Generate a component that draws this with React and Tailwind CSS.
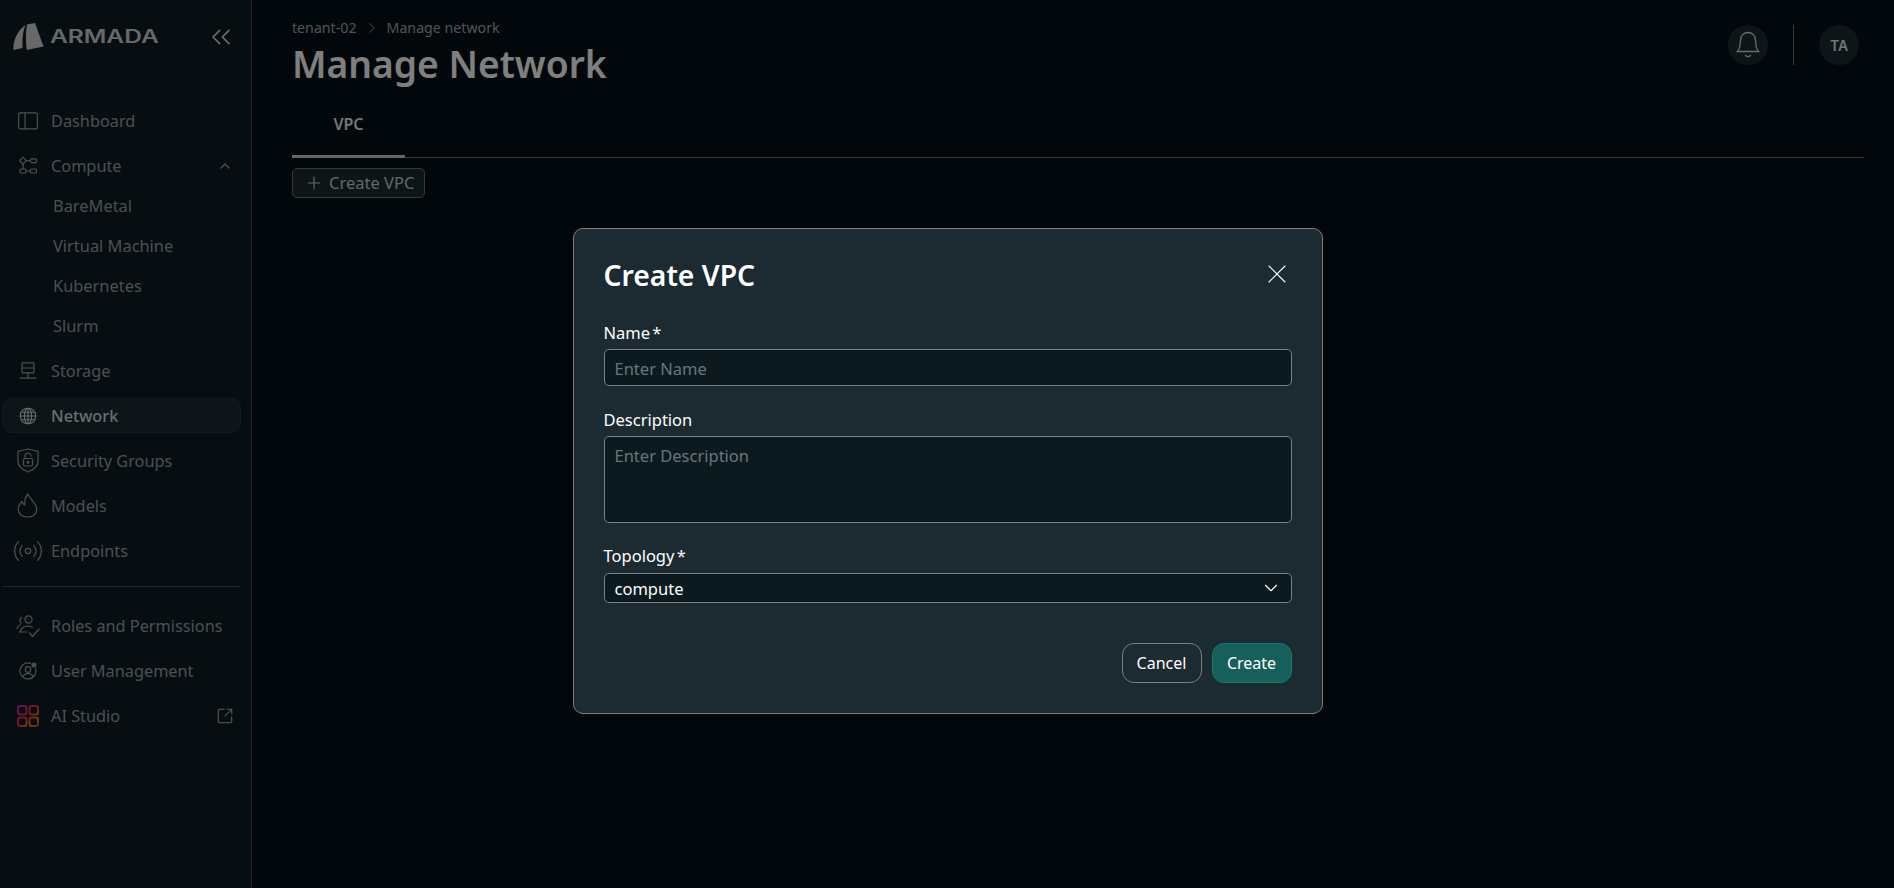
import React from 'react';
import { ChevronsLeft, ChevronUp, ChevronRight, ChevronDown, Plus, Radio, SquareArrowOutUpRight, X } from 'lucide-react';

const iconProps = {
  fill: 'none',
  stroke: 'currentColor',
  strokeWidth: 1.2,
  strokeLinecap: 'round',
  strokeLinejoin: 'round',
};

const DashboardIcon = () => (
  <svg width="20" height="18" viewBox="0 0 20 18" {...iconProps}>
    <rect x="0.6" y="0.9" width="18.8" height="16" rx="2" />
    <path d="M7 1v16" />
  </svg>
);

const ComputeIcon = () => (
  <svg width="20" height="20" viewBox="0 0 20 20" {...iconProps}>
    <path d="M5 1.2 8.4 4.6 5 8 1.6 4.6Z" />
    <rect x="12.5" y="2.8" width="6" height="3.8" rx="1" />
    <rect x="2" y="13" width="6" height="4" rx="1" />
    <rect x="12.5" y="13" width="6" height="4" rx="1" />
    <path d="M8.4 4.6h4M5 8v5M8 15h4.5" />
  </svg>
);

const StorageIcon = () => (
  <svg width="18" height="18" viewBox="0 0 18 18" {...iconProps}>
    <rect x="3" y="0.8" width="12" height="10" rx="0.5" />
    <path d="M3 6h12M9 10.800v5.400M1 16.200h16" />
  </svg>
);

const GlobeIcon = () => (
  <svg width="18" height="18" viewBox="0 0 18 18" {...iconProps} strokeWidth="1.1">
    <circle cx="9" cy="9" r="7.8" />
    <ellipse cx="9" cy="9" rx="3.6" ry="7.8" />
    <path d="M9 1.2v15.6M1.2 9h15.6M2.2 5.2h13.6M2.2 12.8h13.6" />
  </svg>
);

const ShieldIcon = () => (
  <svg width="22" height="25" viewBox="0 0 22 25" {...iconProps}>
    <path d="M1 3.4C4.5 2.6 7.8 1.8 11 1c3.2.8 6.500 1.600 10 2.400v10.200c0 4.600-4.600 8.200-10 10.400-5.400-2.200-10-5.800-10-10.400Z" />
    <rect x="6.500" y="10.500" width="9" height="7.500" rx="1.500" />
    <path d="M8 10.500V8.200a3 3 0 0 1 6 0" />
    <circle cx="11" cy="14.200" r="0.900" />
  </svg>
);

const FlameIcon = () => (
  <svg width="21" height="25" viewBox="0 0 21 25" {...iconProps}>
    <path d="M11 1c.6 5 8.800 8.500 8.800 15.500 0 4.500-4 7.500-9.300 7.500S1.200 21 1.200 16.500c0-3.500 1.800-6 3.800-8 .4 1.700 1.300 3 2.800 3.600C7.500 8 8 4 11 1Z" />
  </svg>
);

const RolesIcon = () => (
  <svg width="24" height="24" viewBox="0 0 24 24" {...iconProps}>
    <circle cx="12.500" cy="5.500" r="3.600" />
    <path d="M5.500 3.500a3.400 3.400 0 0 0-.5 5.500M1 14.500c.3-1.800 1.500-3.200 3-3.800M4 18c1-3.600 4-5.800 8-5.800 1.600 0 3 .4 4.200 1" />
    <path d="M4 18h7M13.500 19l3 3.500 6.500-7.500" />
  </svg>
);

const UserMgmtIcon = () => (
  <svg width="18" height="18" viewBox="0 0 18 18" {...iconProps}>
    <path d="M11.500 1.400A8 8 0 1 0 16.500 6.500" />
    <circle cx="9" cy="7.500" r="2.800" />
    <path d="M3.800 14.500c1-2 3-3 5.200-3s4.200 1 5.200 3" />
    <circle cx="15" cy="3" r="2" fill="currentColor" />
  </svg>
);

const StudioIcon = () => (
  <svg width="22" height="22" viewBox="0 0 22 22" fill="none" strokeWidth="2">
    <defs>
      <linearGradient id="studio" x1="0" y1="0" x2="22" y2="22" gradientUnits="userSpaceOnUse">
        <stop offset="0" stopColor="#c026d3" />
        <stop offset="0.45" stopColor="#ef2b2b" />
        <stop offset="0.8" stopColor="#f97316" />
        <stop offset="1" stopColor="#a21caf" />
      </linearGradient>
    </defs>
    <rect x="1" y="1" width="8.500" height="8.500" rx="2" stroke="url(#studio)" />
    <rect x="12.500" y="1" width="8.500" height="8.500" rx="2" stroke="url(#studio)" />
    <rect x="1" y="12.500" width="8.500" height="8.500" rx="2" stroke="url(#studio)" />
    <rect x="12.500" y="12.500" width="8.500" height="8.500" rx="2" stroke="url(#studio)" />
  </svg>
);

const BellIcon = () => (
  <svg width="26" height="28" viewBox="0 0 26 28" {...iconProps} strokeWidth="1.300">
    <path d="M2 20.500c1.800-1.500 2.800-3 3-6l.5-5.500C6 4.500 9 1.500 13 1.500S20 4.500 20.500 9l.5 5.500c.2 3 1.200 4.500 3 6Z" />
    <path d="M10.500 24.500c1.400 1.300 3.600 1.300 5 0" />
  </svg>
);

const ArmadaLogo = () => (
  <svg width="31" height="28" viewBox="0 0 31 28" fill="currentColor">
    <path d="M.3 27C0 19 3.500 8 12.500 2c-2.500 6-3.500 15-2.800 23Z" />
    <path d="M14 1.400 22 0l8.500 23.500L13.800 27c-1.200-8-1.300-17 .2-25.600Z" />
  </svg>
);

const mainNav = [
  { label: 'Dashboard', icon: <DashboardIcon /> },
  { label: 'Compute', icon: <ComputeIcon />, open: true, children: ['BareMetal', 'Virtual Machine', 'Kubernetes', 'Slurm'] },
  { label: 'Storage', icon: <StorageIcon /> },
  { label: 'Network', icon: <GlobeIcon />, active: true },
  { label: 'Security Groups', icon: <ShieldIcon /> },
  { label: 'Models', icon: <FlameIcon /> },
  { label: 'Endpoints', icon: <Radio size={32} strokeWidth={0.95} /> },
];

const adminNav = [
  { label: 'Roles and Permissions', icon: <RolesIcon /> },
  { label: 'User Management', icon: <UserMgmtIcon /> },
  { label: 'AI Studio', icon: <StudioIcon />, external: true },
];

function NavRow({ item }) {
  return (
    <div
      className={
        'flex h-[35px] items-center rounded-[10px] border ' +
        (item.active ? 'border-[#27343b] bg-[#1c2a31] text-[#d5dade]' : 'border-transparent text-[#989fa4]')
      }
    >
      <span className="flex h-[24px] w-[48px] shrink-0 items-center justify-center pl-[1px]">{item.icon}</span>
      <span className={'text-[16.3px] leading-6' + (item.active ? ' font-medium' : '')}>{item.label}</span>
      {item.open && <ChevronUp size={16} className="ml-auto mr-[7px]" />}
      {item.external && <SquareArrowOutUpRight size={18} strokeWidth={1.4} className="ml-auto mr-[6px] text-[#b5bbbf]" />}
    </div>
  );
}

function Sidebar() {
  return (
    <aside className="flex w-[252px] shrink-0 flex-col border-r border-[#3f4a50] bg-[#0c1c24] pl-[2px] pr-[10px] pt-[22px]">
      <div className="flex h-[30px] items-center pl-[11px] text-[#d0d0d0]">
        <ArmadaLogo />
        <span className="ml-[6px] origin-left scale-x-[1.36] font-['Inter',sans-serif] text-[18px] font-semibold leading-none">ARMADA</span>
        <ChevronsLeft size={32} strokeWidth={1.15} className="ml-auto mr-[4px] shrink-0 text-[#e0e0e0]" />
      </div>
      <nav className="mt-[51px] flex flex-col gap-[10px]">
        {mainNav.map((item) => (
          <div key={item.label}>
            <NavRow item={item} />
            {item.children && (
              <div className="mb-[-3px] mt-[3px] flex flex-col pl-[51px] text-[16.4px] text-[#989fa4]">
                {item.children.map((c) => (
                  <div key={c} className="flex h-[40px] items-center">{c}</div>
                ))}
              </div>
            )}
          </div>
        ))}
      </nav>
      <div className="mb-[21px] mt-[18px] border-t border-[#3f4a50]" />
      <nav className="flex flex-col gap-[10px]">
        {adminNav.map((item) => (
          <NavRow key={item.label} item={item} />
        ))}
      </nav>
    </aside>
  );
}

function Header() {
  return (
    <div className="flex items-start justify-between">
      <div>
        <div className="mt-[1px] flex h-[20px] items-center text-[14.2px] text-[#a2a8ad]">
          tenant-02
          <ChevronRight size={18} strokeWidth={1.2} className="mx-[6px]" />
          Manage network
        </div>
        <h1 className="mt-[4px] text-[37.2px] font-semibold leading-[44px] text-white">Manage Network</h1>
      </div>
      <div className="mr-[5px] mt-[8px] flex items-center">
        <div className="flex h-[40px] w-[40px] items-center justify-center rounded-full bg-[#1c2a31] text-[#d8d8d8]">
          <BellIcon />
        </div>
        <div className="mx-[25px] h-[40px] w-px bg-[#6b7378]" />
        <div className="flex h-[40px] w-[40px] items-center justify-center rounded-full bg-[#1c2a31] font-['Inter',sans-serif] text-[14px] font-semibold text-[#e8e8e8]">TA</div>
      </div>
    </div>
  );
}

function CreateVpcModal() {
  return (
    <div className="fixed inset-0 flex justify-center bg-black/50 pl-[1px] pt-[228px]">
      <div className="h-[486px] w-[750px] rounded-[10px] border border-[#7b8185] bg-[#1c2a31] px-[30px] pt-[26px] text-white">
        <div className="flex items-center justify-between">
          <h2 className="text-[28.3px] font-semibold leading-[40px]">Create VPC</h2>
          <X size={32} strokeWidth={0.8} className="mr-[-1px] mt-[-2px]" />
        </div>
        <label className="mt-[26px] block text-[16.5px] leading-6 [word-spacing:-2px]">Name *</label>
        <input
          placeholder="Enter Name"
          className="mt-[4px] block h-[37px] w-full rounded-[5px] border border-[#7b8185] bg-[#0c1a20] px-[10px] pt-[2px] text-[16.5px] outline-none placeholder:text-[#68767b]"
        />
        <label className="mt-[22px] block text-[16.5px] leading-6">Description</label>
        <textarea
          placeholder="Enter Description"
          className="mt-[4px] block h-[87px] w-full resize-none rounded-[5px] border border-[#7b8185] bg-[#0c1a20] px-[10px] py-[7px] text-[16.5px] outline-none placeholder:text-[#68767b]"
        />
        <label className="mt-[21px] block text-[16.5px] leading-6 [word-spacing:-2px]">Topology *</label>
        <div className="mt-[5px] flex h-[30px] items-center justify-between rounded-[5px] border border-[#7b8185] bg-[#0c1a20] pl-[10px] pr-[9px] text-[16.5px]">
          <span className="pt-[2px]">compute</span>
          <ChevronDown size={22} strokeWidth={1.2} />
        </div>
        <div className="mt-[40px] flex justify-end gap-[10px]">
          <button className="h-[40px] w-[80px] rounded-[12px] border border-[#7b8185] text-[16px]">Cancel</button>
          <button className="h-[40px] w-[80px] rounded-[12px] border border-[#0f7d70] bg-[#165f5a] text-[16px]">Create</button>
        </div>
      </div>
    </div>
  );
}

export default function App() {
  return (
    <div className="relative flex h-screen overflow-hidden bg-[#030e15] font-['Noto_Sans',sans-serif]">
      <Sidebar />
      <main className="flex-1 pl-[40px] pr-[30px] pt-[17px]">
        <Header />
        <div className="mt-[21px] border-b border-[#6b7378]">
          <div className="mb-[-1px] flex h-[51px] w-[113px] items-center justify-center border-b-[3px] border-[#c9cdd0] pb-[15px] text-[16px] font-semibold text-[#e8eaec]">
            VPC
          </div>
        </div>
        <button className="mt-[10px] flex h-[30px] w-[133px] items-center gap-[5px] rounded-[5px] border border-[#6b7378] bg-[#1c2a31] pl-[11px] text-[16.5px] text-[#c9cdd0]">
          <Plus size={20} strokeWidth={1.4} />
          Create VPC
        </button>
      </main>
      <CreateVpcModal />
    </div>
  );
}
